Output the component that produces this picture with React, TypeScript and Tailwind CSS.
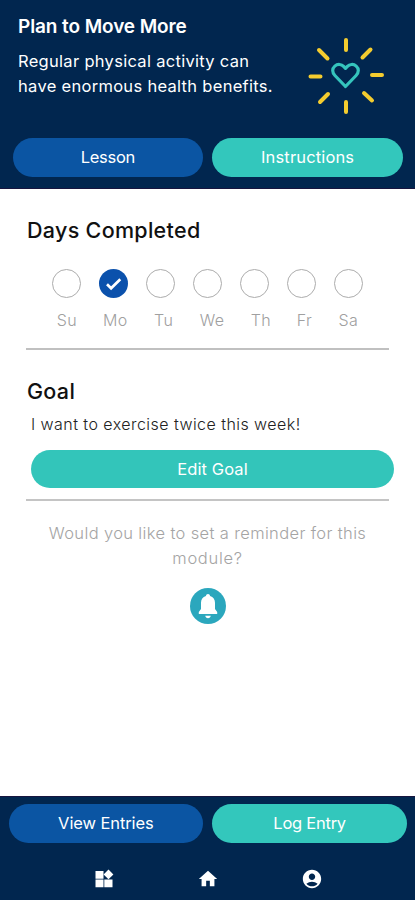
import React from "react"
import { MdAccountCircle, MdHome } from "react-icons/md"

const days = [
  { label: "Su", done: false, shift: "" },
  { label: "Mo", done: true, shift: "pl-[3px]" },
  { label: "Tu", done: false, shift: "pl-[6px]" },
  { label: "We", done: false, shift: "pl-[9px]" },
  { label: "Th", done: false, shift: "pl-[13px]" },
  { label: "Fr", done: false, shift: "pl-[6px]" },
  { label: "Sa", done: false, shift: "" },
]

function SunHeart() {
  return (
    <svg className="h-[80px] w-[80px] shrink-0" viewBox="0 0 80 80" fill="none" strokeLinecap="round">
      <g stroke="#f4cc2f" strokeWidth="4">
        <path d="M40 5v10M40 67v10M4.500 41.500h10M66 40h10" />
        <path d="M13 15l8.500 8.500M64.500 14.500l-8 8M22 59l-8 8M58 58l8 7.500" />
      </g>
      <path
        d="M39.500 51.500L28.900 40.500C26 37.500 26 33.500 28.800 31.100C31.700 28.600 35.600 29.200 37.600 31.400L39.500 33.400L41.400 31.400C43.500 29.200 47.400 28.600 50.200 31.100C53 33.500 53 37.500 50.100 40.500Z"
        stroke="#35c4bd"
        strokeWidth="3.200"
        strokeLinejoin="round"
      />
    </svg>
  )
}

function WidgetsIcon() {
  return (
    <svg className="size-[22px]" viewBox="0 0 22 22" fill="white">
      <path d="M2.500 3h8v7.700h-8zM2.500 11.500h8v7.700h-8zM11.300 11.500h8.200v7.700h-8.200z" />
      <path d="M15.500 1.500l4.900 4.900-4.900 4.900-4.900-4.900z" />
    </svg>
  )
}

function Header() {
  return (
    <header className="flex h-[189px] flex-col border-b border-[#17153f] bg-[#01264f] text-white">
      <div className="flex h-[138px] justify-between pl-[18px]">
        <div className="pt-[14px]">
          <h1 className="text-[19px] leading-[26px] font-semibold tracking-[-0.1px] whitespace-nowrap">Plan to Move More</h1>
          <p className="mt-[9px] text-[16.500px] leading-[25px] whitespace-nowrap">
            <span className="block tracking-[0.3px]">Regular physical activity can</span>
            <span className="block tracking-[0.3px]">have enormous health benefits.</span>
          </p>
        </div>
        <div className="pt-[35px] pr-[29px]">
          <SunHeart />
        </div>
      </div>
      <div className="grid grid-cols-2 gap-[9px] pr-3 pl-[12.500px]">
        <button className="h-[39px] rounded-full bg-[#0b55a3] text-[16.500px] tracking-[-0.3px]">Lesson</button>
        <button className="h-[39px] rounded-full bg-[#33c7bc] text-[16.500px] tracking-[0.15px]">Instructions</button>
      </div>
    </header>
  )
}

function DayTracker() {
  return (
    <section className="mx-[26px] h-[161px] border-b-2 border-[#c0c0c0] pt-[27px]">
      <h2 className="pl-px text-[21.500px] leading-[28px] font-medium tracking-[0.3px] whitespace-nowrap">Days Completed</h2>
      <div className="mt-[25px] flex pl-[17.500px]">
        {days.map((day) => (
          <div key={day.label} className="flex w-[46.900px] shrink-0 flex-col items-center">
            <div
              className={
                day.done
                  ? "flex size-[29px] items-center justify-center rounded-full bg-[#0b51ac]"
                  : "size-[29px] rounded-full border border-[#acacac]"
              }
            >
              {day.done && (
                <svg className="size-[17px]" viewBox="0 0 17 17" fill="none" stroke="white" strokeWidth="2.700">
                  <path d="M2 9.300l4.100 4L15.300 4.300" />
                </svg>
              )}
            </div>
            <span className={`mt-[10px] text-[16px] leading-[24px] font-light tracking-[0.4px] text-[#a0a0a0] ${day.shift}`}>
              {day.label}
            </span>
          </div>
        ))}
      </div>
    </section>
  )
}

function Goal() {
  return (
    <section className="mx-[26px] h-[151px] border-b-2 border-[#c4c4c4] pt-[26px]">
      <h2 className="pl-px text-[21.500px] leading-[30px] font-medium tracking-[0.3px]">Goal</h2>
      <p className="mt-[6px] pl-[5px] text-[16px] leading-[24px] font-light tracking-[0.45px] whitespace-nowrap text-[#222]">
        I want to exercise twice this week!
      </p>
      <button className="mt-[14px] -mr-[5px] ml-[5px] block h-[38px] w-[363px] rounded-full bg-[#33c5ba] text-[16.500px] tracking-[0.1px] text-white">
        Edit Goal
      </button>
    </section>
  )
}

function Reminder() {
  return (
    <section className="flex flex-col items-center pt-[20px]">
      <p className="text-center text-[16.500px] leading-[24.500px] font-light tracking-[0.36px] whitespace-nowrap text-[#a4a4a4]">
        Would you like to set a reminder for this
        <br />
        <span className="tracking-[0.7px]">module?</span>
      </p>
      <button className="mt-[18px] size-[36px] rounded-full bg-[#2ba7bd]" aria-label="Set a reminder">
        <svg viewBox="0 0 36 36" fill="white">
          <path d="M18 6c1.200 0 1.900.8 2.100 1.900 3.200.9 4.900 3.500 4.900 6.800v6.300l2.200 3v1.900H8.800V24l2.200-3v-6.300c0-3.300 1.700-5.900 4.900-6.800.2-1.100.9-1.900 2.100-1.900z" />
          <path d="M15.200 27.800h5.600c-.3 1.500-1.300 2.400-2.800 2.400s-2.500-.9-2.800-2.400z" />
        </svg>
      </button>
    </section>
  )
}

function Footer() {
  return (
    <footer className="mt-auto h-[104px] border-t border-[#17153f] bg-[#01264f] pt-[7px] text-white">
      <div className="grid grid-cols-2 gap-[9px] pr-2 pl-[8.500px]">
        <button className="h-[39px] rounded-full bg-[#0b55a3] text-[16.500px] tracking-[-0.1px]">View Entries</button>
        <button className="h-[39px] rounded-full bg-[#33c7bc] text-[16.500px] tracking-[-0.25px]">Log Entry</button>
      </div>
      <nav className="mt-[25px] flex items-center justify-center gap-[82px]">
        <WidgetsIcon />
        <MdHome size={22} />
        <MdAccountCircle size={22} />
      </nav>
    </footer>
  )
}

export default function App() {
  return (
    <div className="flex h-[900px] w-[415px] flex-col bg-white font-['Inter','Open_Sans',sans-serif] text-[#111]">
      <Header />
      <DayTracker />
      <Goal />
      <Reminder />
      <Footer />
    </div>
  )
}
